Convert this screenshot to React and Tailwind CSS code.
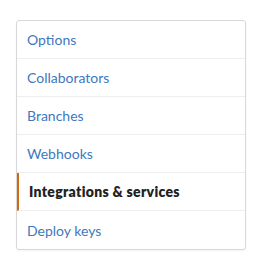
import React from 'react';

const items = [
  { name: 'Options' },
  { name: 'Collaborators' },
  { name: 'Branches' },
  { name: 'Webhooks' },
  { name: 'Integrations & services', selected: true },
  { name: 'Deploy keys' },
];

export default function App() {
  return (
    <div className="bg-white w-[255px] h-[262px] pt-[20px] pl-[16px] font-['Lato','Open_Sans',sans-serif]">
      <nav className="w-[230px] border border-[#d8d8d8] rounded-[3px] shadow-[0_1px_2px_rgba(0,0,0,0.05)] overflow-hidden">
        {items.map((item, i) => (
          <a
            key={item.name}
            href="#"
            className={
              'flex items-center h-[38px] pl-[10px] text-[14px] ' +
              (i < items.length - 1 ? 'border-b border-[#eeeeee] ' : '') +
              (item.selected
                ? 'font-[800] text-[#222222] border-l-[2px] border-l-[#d26911] pl-[8px] tracking-[0.3px]'
                : 'text-[#4078c0]')
            }
          >
            {item.name}
          </a>
        ))}
      </nav>
    </div>
  );
}
